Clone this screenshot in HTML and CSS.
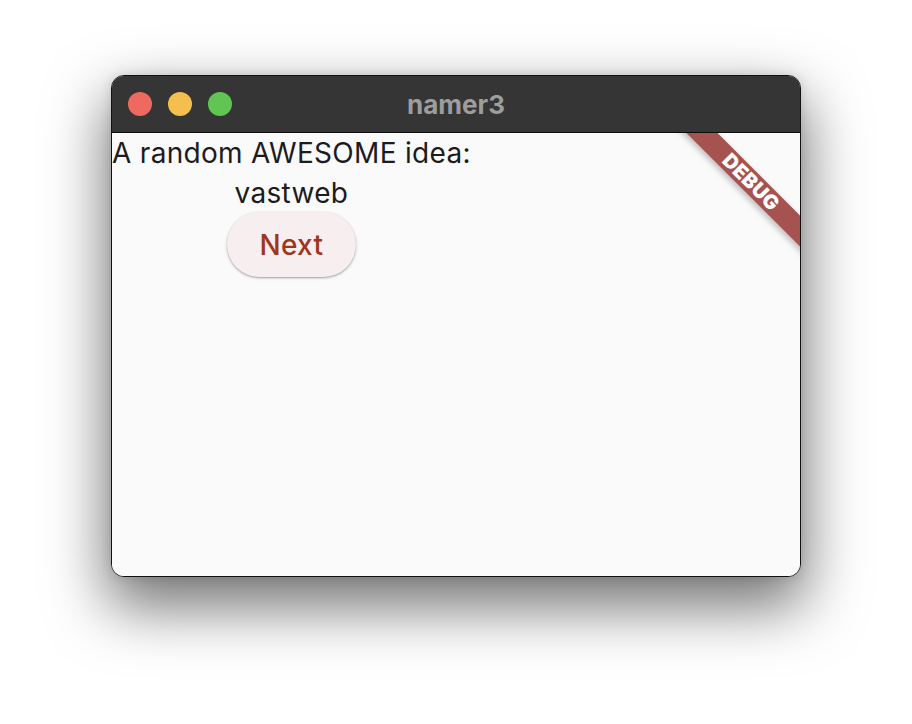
FILE: index.html
```html
<!DOCTYPE html>
<html>
<head>
<meta charset="utf-8">
<link rel="stylesheet" href="styles.css">
</head>
<body>
<div class="desktop">
  <div class="window">
    <div class="titlebar">
      <div class="lights">
        <span class="light red"></span>
        <span class="light yellow"></span>
        <span class="light green"></span>
      </div>
      <div class="title">namer3</div>
    </div>
    <div class="content">
      <div class="column">
        <div class="line">A random AWESOME idea:</div>
        <div class="line">vastweb</div>
        <button class="btn">Next</button>
      </div>
      <div class="banner"><span>DEBUG</span></div>
    </div>
  </div>
</div>
</body>
</html>
```
FILE: styles.css
```css
html, body {
  margin: 0;
  padding: 0;
  background: #ffffff;
}
.desktop {
  width: 912px;
  height: 724px;
  position: relative;
  overflow: hidden;
}
.window {
  position: absolute;
  left: 111px;
  top: 75px;
  width: 690px;
  height: 502px;
  box-sizing: border-box;
  border: 1px solid #111;
  border-radius: 13px;
  overflow: hidden;
  display: flex;
  flex-direction: column;
  box-shadow: 0 26px 60px 4px rgba(0,0,0,0.55), 0 0 12px rgba(0,0,0,0.12);
  background: #fafafa;
}
.titlebar {
  height: 56px;
  flex: none;
  background: #353535;
  border-bottom: 1px solid #0c0c0c;
  position: relative;
  display: flex;
  align-items: center;
  justify-content: center;
}
.lights {
  position: absolute;
  left: 16px;
  top: 16px;
  display: flex;
  gap: 16px;
}
.light {
  width: 24px;
  height: 24px;
  border-radius: 50%;
  display: block;
}
.red { background: #ee6a5e; }
.yellow { background: #f5bf4f; }
.green { background: #61c554; }
.title {
  font-family: Inter, "Liberation Sans", sans-serif;
  font-weight: 700;
  font-size: 26px;
  color: #9d9d9d;
  padding-top: 1px;
}
.content {
  flex: 1;
  position: relative;
  overflow: hidden;
  background: #fafafa;
}
.column {
  display: inline-flex;
  flex-direction: column;
  align-items: center;
}
.line {
  font-family: Inter, "Liberation Sans", sans-serif;
  font-size: 28px;
  line-height: 40px;
  letter-spacing: 0.3px;
  color: #1d1b1e;
  white-space: nowrap;
}
.btn {
  margin-top: -1px;
  width: 129px;
  height: 65px;
  border: none;
  border-radius: 33px;
  background: #f7eef0;
  color: #9f3618;
  font-family: Inter, "Liberation Sans", sans-serif;
  font-weight: 500;
  font-size: 28px;
  letter-spacing: 0.3px;
  padding: 0;
  box-shadow: 0 1px 3px rgba(0,0,0,0.28), 0 1px 1px rgba(0,0,0,0.12);
}
.banner {
  position: absolute;
  top: 38px;
  right: -51px;
  width: 200px;
  height: 22px;
  background: #a65250;
  transform: rotate(45deg);
  display: flex;
  align-items: center;
  justify-content: center;
  box-shadow: 0 3px 6px rgba(0,0,0,0.25);
}
.banner span {
  font-family: Inter, "Liberation Sans", sans-serif;
  font-weight: 900;
  font-size: 20px;
  line-height: 20px;
  color: #ffffff;
  letter-spacing: 0.3px;
}
```
